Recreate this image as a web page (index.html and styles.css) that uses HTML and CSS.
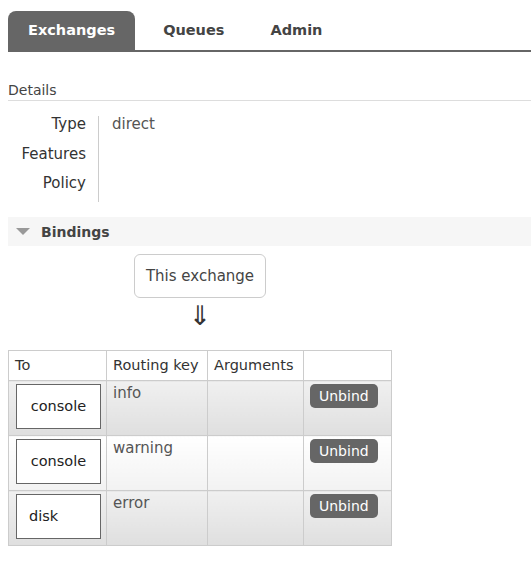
FILE: index.html
```html
<!DOCTYPE html>
<html>
<head>
<meta charset="utf-8">
<link rel="stylesheet" href="styles.css">
</head>
<body>
<ul class="tabs">
  <li class="tab active">Exchanges</li>
  <li class="tab">Queues</li>
  <li class="tab">Admin</li>
</ul>

<h2 class="section-title">Details</h2>
<div class="details">
  <div class="labels">
    <div class="label">Type</div>
    <div class="label">Features</div>
    <div class="label">Policy</div>
  </div>
  <div class="values">
    <div class="value">direct</div>
  </div>
</div>

<div class="bindings-head">
  <span class="tri"></span>
  <span class="bindings-title">Bindings</span>
</div>

<div class="source-wrap">
  <div class="source">This exchange</div>
  <div class="arrow">⇓</div>
</div>

<table class="bindings">
  <colgroup>
    <col class="c1"><col class="c2"><col class="c3"><col class="c4">
  </colgroup>
  <thead>
    <tr><th>To</th><th>Routing key</th><th>Arguments</th><th></th></tr>
  </thead>
  <tbody>
    <tr class="alt">
      <td><div class="dest">console</div></td>
      <td>info</td>
      <td></td>
      <td><span class="btn">Unbind</span></td>
    </tr>
    <tr class="plain">
      <td><div class="dest">console</div></td>
      <td>warning</td>
      <td></td>
      <td><span class="btn">Unbind</span></td>
    </tr>
    <tr class="alt">
      <td><div class="dest left">disk</div></td>
      <td>error</td>
      <td></td>
      <td><span class="btn">Unbind</span></td>
    </tr>
  </tbody>
</table>
</body>
</html>
```

FILE: styles.css
```css
html, body {
  margin: 0;
  padding: 0;
  background: #fff;
}
body {
  margin: 0 0 0 8px;
  font-family: "DejaVu Sans", Verdana, sans-serif;
  font-size: 14px;
  color: #444;
}
.tabs {
  list-style: none;
  margin: 0;
  padding: 11px 0 0 0;
  display: flex;
  border-bottom: 2px solid #666;
}
.tab {
  height: 39px;
  line-height: 39px;
  padding: 0 20px;
  margin-right: 8px;
  font-size: 14.5px;
  font-weight: bold;
  color: #444;
  border-radius: 8px 8px 0 0;
}
.tab.active {
  background: #666;
  color: #fff;
}
.tab:nth-child(2) { margin-right: 6px; }
.section-title {
  margin: 30px 0 0 0;
  font-size: 14px;
  font-weight: normal;
  color: #444;
  height: 18px;
  line-height: 16px;
  border-bottom: 1px solid #ddd;
}
.details {
  display: flex;
  margin-top: 15px;
  font-size: 15px;
}
.labels {
  width: 78px;
  padding-right: 12px;
  text-align: right;
  border-right: 1px solid #ccc;
  height: 86px;
  color: #333;
}
.label {
  height: 29px;
  line-height: 17px;
}
.label:first-child { height: 30px; }
.values {
  padding-left: 13px;
}
.value {
  line-height: 17px;
  color: #555;
}
.bindings-head {
  margin-top: 15px;
  height: 29px;
  background: #f6f6f6;
  display: flex;
  align-items: center;
}
.tri {
  width: 0;
  height: 0;
  margin-left: 8px;
  margin-right: 11px;
  border-left: 7px solid transparent;
  border-right: 7px solid transparent;
  border-top: 7px solid #999;
}
.bindings-title {
  font-weight: bold;
  font-size: 14px;
  color: #444;
}
.source-wrap {
  width: 132px;
  margin-left: 126px;
  margin-top: 8px;
  display: flex;
  flex-direction: column;
  align-items: center;
}
.source {
  box-sizing: border-box;
  width: 132px;
  height: 44px;
  border: 1px solid #ccc;
  border-radius: 6px;
  text-align: center;
  line-height: 42px;
  font-size: 15px;
  color: #444;
}
.arrow {
  margin-top: 4px;
  font-size: 27px;
  line-height: 28px;
  height: 28px;
  color: #333;
}
.bindings {
  margin-top: 20px;
  border-collapse: collapse;
  table-layout: fixed;
  width: 383px;
  font-size: 15px;
}
.c1 { width: 98px; }
.c2 { width: 101px; }
.c3 { width: 96px; }
.c4 { width: 88px; }
.bindings th, .bindings td {
  border: 1px solid #ccc;
  padding: 0;
  text-align: left;
  vertical-align: top;
}
.bindings th {
  font-weight: normal;
  font-size: 14.5px;
  color: #333;
  height: 29px;
  line-height: 29px;
  padding: 0 6px;
  white-space: nowrap;
  overflow: visible;
}
.bindings td {
  height: 55px;
  padding: 3px 6px 0 6px;
  box-sizing: border-box;
  color: #555;
  line-height: 18px;
}
.bindings td:first-child { padding-left: 7px; }
.alt td {
  background: linear-gradient(#f0f0f0, #dfdfdf);
}
.plain td {
  background: linear-gradient(#fff, #f2f2f2);
}
.dest {
  box-sizing: border-box;
  width: 85px;
  height: 45px;
  border: 1px solid #666;
  background: #fff;
  text-align: center;
  line-height: 43px;
  color: #222;
  font-size: 14.5px;
}
.dest.left {
  text-align: left;
  padding-left: 12px;
}
.btn {
  display: inline-block;
  background: #666;
  color: #fff;
  border-radius: 5px;
  height: 24px;
  line-height: 24px;
  padding: 0 9px;
  font-size: 14px;
}
```
